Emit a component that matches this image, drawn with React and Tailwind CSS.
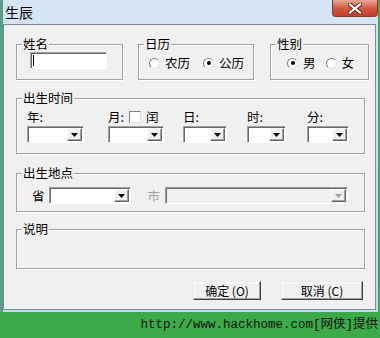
const font = { fontFamily: '"Noto Sans CJK SC", "Noto Sans", sans-serif' };

function Arrow({ disabled }) {
  return (
    <svg width="7" height="4" viewBox="0 0 7 4">
      <path d="M0 0h7L3.5 4z" fill={disabled ? "#a0a0a0" : "#000"} />
    </svg>
  );
}

function Combo({ width, disabled }) {
  return (
    <div
      className={`flex h-[17px] border-t border-l border-t-[#a0a0a0] border-l-[#a0a0a0] border-b border-r border-b-white border-r-white shadow-[inset_1px_1px_0_#696969] ${disabled ? "bg-[#f0f0f0]" : "bg-white"}`}
      style={{ width }}
    >
      <div className="flex-1" />
      <div className="w-[15px] my-[1px] mr-[1px] flex items-center justify-center bg-[#f0f0f0] border-t border-l border-t-white border-l-white border-b border-r border-b-[#696969] border-r-[#696969] shadow-[inset_-1px_-1px_0_#a0a0a0]">
        <Arrow disabled={disabled} />
      </div>
    </div>
  );
}

function Radio({ checked, label }) {
  return (
    <div className="flex items-center">
      <div className="w-[11px] h-[11px] rounded-full bg-white border border-t-[#808080] border-l-[#808080] border-b-[#e0e0e0] border-r-[#e0e0e0] flex items-center justify-center">
        {checked && <div className="w-[4px] h-[4px] rounded-full bg-black" />}
      </div>
      <span className="ml-[5px] text-[12.5px] leading-[14px]">{label}</span>
    </div>
  );
}

function Group({ title, className, children }) {
  return (
    <fieldset className={`border border-[#a0a0a0] shadow-[inset_1px_1px_0_#fff,1px_1px_0_#fff] ${className}`}>
      <legend className="ml-[5px] px-[1px] text-[12.5px] leading-[14px]">{title}</legend>
      {children}
    </fieldset>
  );
}

function Btn({ children, width }) {
  return (
    <div
      className="h-[19px] flex items-center justify-center text-[12px] bg-[#f0f0f0] border border-t-[#e8e8e8] border-l-[#e8e8e8] border-b-[#404040] border-r-[#404040] shadow-[inset_-1px_-1px_0_#a0a0a0,inset_1px_1px_0_#fff]"
      style={{ width }}
    >
      {children}
    </div>
  );
}

function TimeCol({ label, width, ml, extra }) {
  return (
    <div className="flex flex-col" style={{ width, marginLeft: ml }}>
      <div className="flex items-center h-[14px] text-[12.5px] leading-[14px]">
        <span>{label}</span>
        {extra}
      </div>
      <div className="mt-[2px]">
        <Combo width={width} />
      </div>
    </div>
  );
}

export default function App() {
  return (
    <div className="w-[380px] h-[338px] bg-[#3caa48] text-black overflow-hidden" style={font}>
      <div className="w-[378px] h-[312px] flex flex-col border-l-[3px] border-l-[#5b9c86] bg-gradient-to-b from-[#d6e5f6] to-[#c4d8ef]">
        <div className="h-[24px] flex items-start justify-between">
          <span className="ml-[2px] mt-[4px] text-[14px] leading-[16px]">生辰</span>
          <div className="w-[46px] h-[17px] rounded-b-[4px] border border-t-0 border-[#8c3526] bg-gradient-to-b from-[#e9a796] via-[#d05a44] to-[#c2402a] flex items-center justify-center">
            <svg width="14" height="11" viewBox="0 0 14 11">
              <path d="M2 1.5l10 8M12 1.5l-10 8" stroke="#5a2018" strokeWidth="4" strokeLinecap="square" />
              <path d="M2 1.5l10 8M12 1.5l-10 8" stroke="#fff" strokeWidth="2.2" strokeLinecap="square" />
            </svg>
          </div>
        </div>
        <div className="w-[373px] h-[286px] bg-[#f0f0f0] border border-[#7d8b99] flex flex-col pl-[12px] pt-[12px]">
          <div className="flex">
            <Group title="姓名" className="w-[107px] h-[43px]">
              <div className="ml-[13px] mt-[1px] w-[77px] h-[17px] bg-white border-t border-l border-t-[#a0a0a0] border-l-[#a0a0a0] border-b border-r border-b-white border-r-white shadow-[inset_1px_1px_0_#696969] flex items-center">
                <div className="ml-[2px] w-[1px] h-[11px] bg-black" />
              </div>
            </Group>
            <Group title="日历" className="ml-[15px] w-[116px] h-[43px]">
              <div className="flex mt-[5px] ml-[10px] gap-[13px]">
                <Radio label="农历" />
                <Radio checked label="公历" />
              </div>
            </Group>
            <Group title="性别" className="ml-[16px] w-[99px] h-[43px]">
              <div className="flex mt-[5px] ml-[16px] gap-[10px]">
                <Radio checked label="男" />
                <Radio label="女" />
              </div>
            </Group>
          </div>

          <Group title="出生时间" className="mt-[11px] w-[349px] h-[63px]">
            <div className="flex mt-[5px]">
              <TimeCol label="年:" width={57} ml={10} />
              <TimeCol
                label="月:"
                width={56}
                ml={24}
                extra={
                  <>
                    <div className="ml-[5px] w-[12px] h-[12px] bg-white border border-t-[#808080] border-l-[#808080] border-b-[#e0e0e0] border-r-[#e0e0e0]" />
                    <span className="ml-[5px]">闰</span>
                  </>
                }
              />
              <TimeCol label="日:" width={44} ml={19} />
              <TimeCol label="时:" width={39} ml={20} />
              <TimeCol label="分:" width={42} ml={21} />
            </div>
          </Group>

          <Group title="出生地点" className="mt-[12px] w-[349px] h-[46px]">
            <div className="flex items-center mt-[7px]">
              <span className="ml-[15px] text-[12.5px] leading-[14px]">省</span>
              <div className="ml-[4px]">
                <Combo width={82} />
              </div>
              <span className="ml-[17px] text-[12.5px] leading-[14px] text-[#a0a0a0]">市</span>
              <div className="ml-[5px]">
                <Combo width={183} disabled />
              </div>
            </div>
          </Group>

          <Group title="说明" className="mt-[10px] w-[349px] h-[47px]">
            <div />
          </Group>

          <div className="flex justify-end gap-[20px] mt-[12px] pr-[12px]">
            <Btn width={68}>确定 (O)</Btn>
            <Btn width={82}>取消 (C)</Btn>
          </div>
        </div>
      </div>
      <div className="h-[26px] flex items-center justify-end pr-[2px]">
        <span className="text-[12.5px] text-[#111]" style={{ fontFamily: '"Liberation Mono", "Noto Sans CJK SC", monospace' }}>
          http://www.hackhome.com[网侠]提供
        </span>
      </div>
    </div>
  );
}
